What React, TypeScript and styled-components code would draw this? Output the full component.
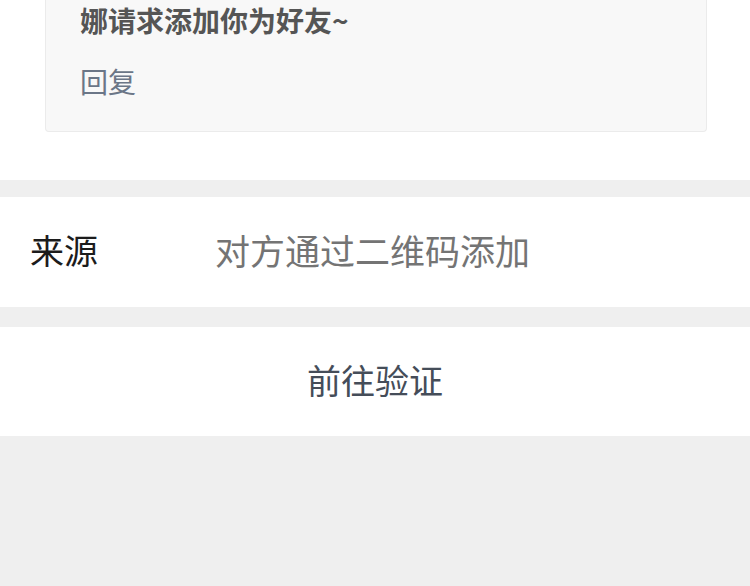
import React from "react";
import styled, { createGlobalStyle } from "styled-components";

const GlobalStyle = createGlobalStyle`
  html, body {
    margin: 0;
    padding: 0;
    background: #efefef;
    font-family: "Noto Sans CJK SC", "Noto Sans", sans-serif;
  }
  * { box-sizing: border-box; }
`;

const Page = styled.div`
  display: flex;
  flex-direction: column;
  min-height: 586px;
  background: #efefef;
`;

const MessageSection = styled.section`
  background: #ffffff;
  padding: 0 43px 48px 45px;
`;

const MessageCard = styled.div`
  background: #f8f8f8;
  border: 1px solid #ebebeb;
  border-top: none;
  border-radius: 0 0 4px 4px;
  padding: 0 0 30px 34px;
  display: flex;
  flex-direction: column;
  gap: 21px;
`;

const MessageText = styled.div`
  font-size: 28px;
  line-height: 40px;
  font-weight: 700;
  color: #555555;
`;

const ReplyLink = styled.div`
  font-size: 28px;
  line-height: 40px;
  color: #6b7687;
`;

const Section = styled.div<{ $gap: number }>`
  margin-top: ${(p) => p.$gap}px;
  background: #ffffff;
`;

const InfoRow = styled.div`
  display: grid;
  grid-template-columns: 185px 1fr;
  align-items: center;
  height: 110px;
  padding: 0 0 5px 30px;
`;

const Label = styled.span`
  font-size: 34px;
  color: #1c1c1c;
`;

const Value = styled.span`
  font-size: 35px;
  color: #747474;
`;

const ActionButton = styled.div`
  display: flex;
  align-items: center;
  justify-content: center;
  height: 109px;
  padding-bottom: 4px;
  font-size: 34px;
  color: #454d59;
`;

export default function App() {
  return (
    <>
      <GlobalStyle />
      <Page>
        <MessageSection>
          <MessageCard>
            <MessageText>娜请求添加你为好友~</MessageText>
            <ReplyLink>回复</ReplyLink>
          </MessageCard>
        </MessageSection>
        <Section $gap={17}>
          <InfoRow>
            <Label>来源</Label>
            <Value>对方通过二维码添加</Value>
          </InfoRow>
        </Section>
        <Section $gap={20}>
          <ActionButton>前往验证</ActionButton>
        </Section>
      </Page>
    </>
  );
}
